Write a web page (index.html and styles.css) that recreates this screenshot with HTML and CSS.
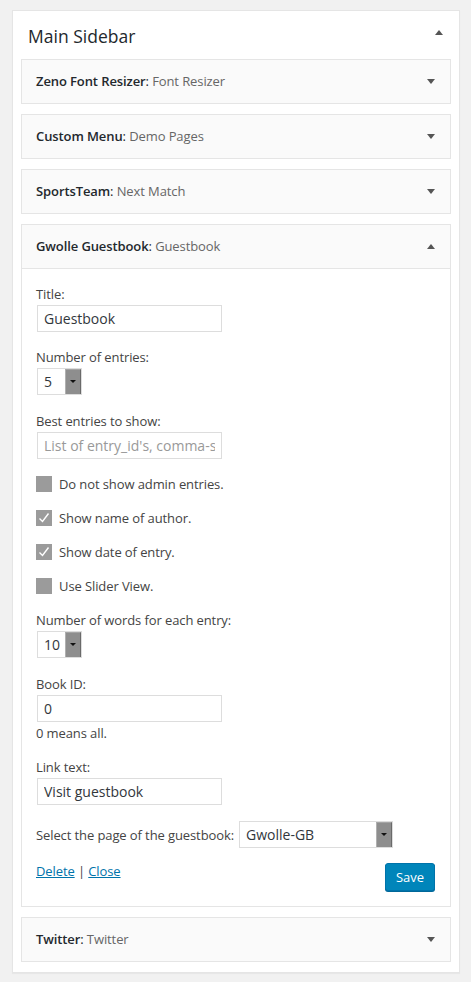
FILE: index.html
```html
<!DOCTYPE html>
<html lang="en">
<head>
  <meta charset="UTF-8" />
  <meta name="viewport" content="width=device-width, initial-scale=1.0"/>
  <title>Widgets</title>
  <link rel="stylesheet" href="styles.css">
</head>
<body>
  <div class="sidebar">
    <div class="sidebar-name">
      <h2>Main Sidebar</h2>
      <span class="arrow up"></span>
    </div>

    <div class="widget">
      <div class="widget-top">
        <h3><strong>Zeno Font Resizer</strong>: <span class="in-title">Font Resizer</span></h3>
        <span class="arrow"></span>
      </div>
    </div>

    <div class="widget">
      <div class="widget-top">
        <h3><strong>Custom Menu</strong>: <span class="in-title">Demo Pages</span></h3>
        <span class="arrow"></span>
      </div>
    </div>

    <div class="widget">
      <div class="widget-top">
        <h3><strong>SportsTeam</strong>: <span class="in-title">Next Match</span></h3>
        <span class="arrow"></span>
      </div>
    </div>

    <div class="widget open">
      <div class="widget-top">
        <h3><strong>Gwolle Guestbook</strong>: <span class="in-title">Guestbook</span></h3>
        <span class="arrow up"></span>
      </div>
      <div class="widget-inside">
        <div class="field">
          <label>Title:</label>
          <input class="text" type="text" value="Guestbook">
        </div>
        <div class="field field-lg">
          <label>Number of entries:</label>
          <div class="select small"><span>5</span><i class="select-btn"></i></div>
        </div>
        <div class="field">
          <label>Best entries to show:</label>
          <input class="text" type="text" placeholder="List of entry_id's, comma-separated">
        </div>

        <div class="check">
          <span class="box"></span>Do not show admin entries.
        </div>
        <div class="check">
          <span class="box"><svg viewBox="0 0 16 16" width="16" height="16"><path d="M3.5 8.5l3 3 6-8" fill="none" stroke="#fff" stroke-width="1.4"/></svg></span>Show name of author.
        </div>
        <div class="check">
          <span class="box"><svg viewBox="0 0 16 16" width="16" height="16"><path d="M3.5 8.5l3 3 6-8" fill="none" stroke="#fff" stroke-width="1.4"/></svg></span>Show date of entry.
        </div>
        <div class="check">
          <span class="box"></span>Use Slider View.
        </div>

        <div class="field field-lg">
          <label>Number of words for each entry:</label>
          <div class="select small"><span>10</span><i class="select-btn"></i></div>
        </div>
        <div class="field">
          <label>Book ID:</label>
          <input class="text" type="text" value="0">
          <p class="note">0 means all.</p>
        </div>
        <div class="field">
          <label>Link text:</label>
          <input class="text" type="text" value="Visit guestbook">
        </div>
        <div class="field inline">
          <label>Select the page of the guestbook:</label>
          <div class="select wide"><span>Gwolle-GB</span><i class="select-btn"></i></div>
        </div>

        <div class="widget-actions">
          <div class="links"><a href="#">Delete</a> | <a href="#">Close</a></div>
          <button class="btn-save">Save</button>
        </div>
      </div>
    </div>

    <div class="widget">
      <div class="widget-top">
        <h3><strong>Twitter</strong>: <span class="in-title">Twitter</span></h3>
        <span class="arrow"></span>
      </div>
    </div>
  </div>
</body>
</html>
```

FILE: styles.css
```css
body {
  margin: 0;
  padding: 10px 11px 10px 12px;
  background-color: #f1f1f1;
  font-family: "Open Sans", sans-serif;
  font-size: 13px;
  letter-spacing: -0.1px;
  color: #444;
}

.sidebar {
  width: 430px;
  background: #fff;
  border: 1px solid #e5e5e5;
  box-shadow: 0 1px 1px rgba(0, 0, 0, 0.04);
  padding: 0 8px 10px 8px;
}

.sidebar-name {
  display: flex;
  justify-content: space-between;
  align-items: flex-start;
  padding: 15px 8px 12px 7px;
}

.sidebar-name h2 {
  margin: 0;
  font-size: 17.5px;
  font-weight: 400;
  line-height: 21px;
  letter-spacing: 0;
  color: #23282d;
}

.sidebar-name .arrow {
  margin-top: 4px;
}

/* little triangles used as toggles */
.arrow {
  width: 0;
  height: 0;
  border-left: 4px solid transparent;
  border-right: 4px solid transparent;
  border-top: 5px solid #555;
}

.arrow.up {
  border-top: none;
  border-bottom: 5px solid #555;
}

.widget {
  border: 1px solid #e5e5e5;
  background: #fafafa;
  margin-bottom: 10px;
}

.widget:last-child {
  margin-bottom: 0;
}

.widget-top {
  display: flex;
  justify-content: space-between;
  align-items: center;
  padding: 12px 15px 13px 14px;
}

.widget-top h3 {
  margin: 0;
  font-size: 13px;
  line-height: 18px;
  font-weight: 400;
  color: #23282d;
}

.widget-top strong {
  font-weight: 600;
}

.in-title {
  color: #666;
}

.widget.open .widget-top {
  border-bottom: 1px solid #e5e5e5;
}

.widget-inside {
  background: #fff;
  padding: 16px 15px 15px 14px;
}

.field {
  margin-bottom: 16px;
}

.field-lg {
  margin-bottom: 17px;
}

.field label {
  display: block;
  line-height: 18px;
  margin-bottom: 2px;
}

.text {
  display: block;
  box-sizing: border-box;
  width: 185px;
  height: 27px;
  margin: 0 0 0 1px;
  padding: 0 6px;
  border: 1px solid #ddd;
  font-family: "Open Sans", sans-serif;
  font-size: 14px;
  letter-spacing: 0;
  color: #32373c;
  outline: none;
}

.text::placeholder {
  color: #999;
}

.note {
  margin: 2px 0 0;
  line-height: 18px;
}

/* old style select: white field plus grey drop button */
.select {
  display: flex;
  box-sizing: border-box;
  height: 27px;
  margin-left: 1px;
  border: 1px solid #ddd;
  font-size: 14px;
  letter-spacing: 0;
  color: #32373c;
}

.select span {
  flex: 1;
  line-height: 25px;
  padding-left: 6px;
}

.select.small {
  width: 45px;
}

.select.wide {
  width: 154px;
}

.select-btn {
  position: relative;
  width: 14px;
  background: #8e8e8e;
  border-left: 1px solid #b0b0b0;
  border-top: 1px solid #a5a5a5;
  border-right: 1px solid #6a6a6a;
}

.select-btn::after {
  content: "";
  position: absolute;
  left: 4px;
  top: 10px;
  border-left: 3px solid transparent;
  border-right: 3px solid transparent;
  border-top: 3px solid #111;
}

.check {
  display: flex;
  align-items: center;
  height: 18px;
  margin-bottom: 16px;
}

.check .box {
  width: 16px;
  height: 16px;
  background: #9b9b9b;
  margin-right: 7px;
}

.check .box svg {
  display: block;
}

.field.inline {
  display: flex;
  align-items: center;
  margin-bottom: 15px;
}

.field.inline label {
  display: inline;
  margin: 0 4px 0 0;
}

.widget-actions {
  display: flex;
  justify-content: space-between;
  align-items: flex-start;
}

.links {
  line-height: 18px;
  margin-top: -1px;
}

.links a {
  color: #0073aa;
}

.btn-save {
  height: 28px;
  width: 50px;
  padding: 0;
  background: #0085ba;
  border: 1px solid #0073aa;
  border-radius: 3px;
  color: #fff;
  font-family: "Open Sans", sans-serif;
  font-size: 13px;
  box-shadow: 0 1px 0 #006799;
}
```
